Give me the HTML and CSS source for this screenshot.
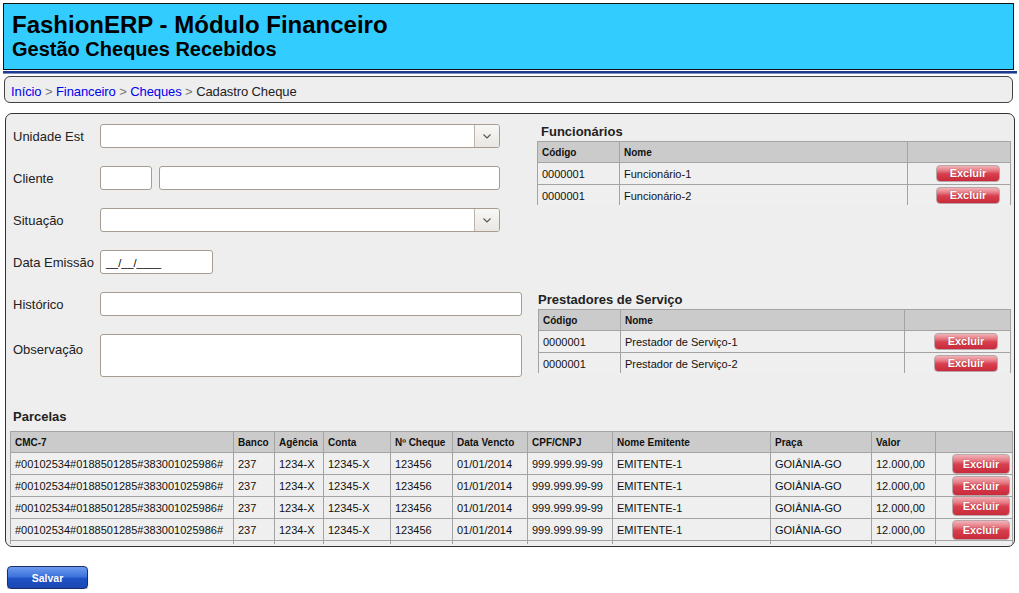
FILE: index.html
```html
<!DOCTYPE html>
<html lang="pt-BR">
<head>
<meta charset="utf-8">
<title>FashionERP - Módulo Financeiro</title>
<link rel="stylesheet" href="styles.css">
</head>
<body>
<header class="app-header">
  <h1 class="app-title">FashionERP - Módulo Financeiro</h1>
  <h2 class="app-subtitle">Gestão Cheques Recebidos</h2>
</header>
<div class="header-rule"></div>
<nav class="breadcrumb">
  <a href="#">Início</a> <span class="sep">&gt;</span> <a href="#">Financeiro</a> <span class="sep">&gt;</span> <a href="#">Cheques</a> <span class="sep">&gt;</span> <span class="current">Cadastro Cheque</span>
</nav>
<main class="panel">
  <div class="panel-top">
    <div class="form">
      <label class="form-label">Unidade Est</label>
      <div class="select">
        <div class="select-value"></div>
        <div class="select-btn"><svg width="8" height="5" viewBox="0 0 8 5"><polyline points="0.5,0.5 4,4 7.5,0.5" fill="none" stroke="#555" stroke-width="1.1"/></svg></div>
      </div>

      <label class="form-label">Cliente</label>
      <div class="pair">
        <div class="input input-code"></div>
        <div class="input input-grow"></div>
      </div>

      <label class="form-label">Situação</label>
      <div class="select">
        <div class="select-value"></div>
        <div class="select-btn"><svg width="8" height="5" viewBox="0 0 8 5"><polyline points="0.5,0.5 4,4 7.5,0.5" fill="none" stroke="#555" stroke-width="1.1"/></svg></div>
      </div>

      <label class="form-label">Data Emissão</label>
      <div class="input input-date">__/__/____</div>

      <label class="form-label">Histórico</label>
      <div class="input input-wide"></div>

      <label class="form-label form-label-top">Observação</label>
      <div class="input input-area"></div>
    </div>

    <aside class="side">
      <section class="side-section">
        <h3 class="section-title section-title-first">Funcionários</h3>
        <div class="grid-clip">
          <table class="grid grid-func">
            <thead>
              <tr><th class="c-cod">Código</th><th class="c-nome">Nome</th><th class="c-act"></th></tr>
            </thead>
            <tbody>
              <tr><td>0000001</td><td>Funcionário-1</td><td class="act act-small"><button class="btn-excluir btn-small">Excluir</button></td></tr>
              <tr><td>0000001</td><td>Funcionário-2</td><td class="act act-small"><button class="btn-excluir btn-small">Excluir</button></td></tr>
            </tbody>
          </table>
        </div>
      </section>
      <section class="side-section side-section-second">
        <h3 class="section-title">Prestadores de Serviço</h3>
        <div class="grid-clip">
          <table class="grid grid-prest">
            <thead>
              <tr><th class="c-cod">Código</th><th class="c-nome">Nome</th><th class="c-act"></th></tr>
            </thead>
            <tbody>
              <tr><td>0000001</td><td>Prestador de Serviço-1</td><td class="act act-small act-prest"><button class="btn-excluir btn-small">Excluir</button></td></tr>
              <tr><td>0000001</td><td>Prestador de Serviço-2</td><td class="act act-small act-prest"><button class="btn-excluir btn-small">Excluir</button></td></tr>
            </tbody>
          </table>
        </div>
      </section>
    </aside>
  </div>

  <section class="parcelas">
    <h3 class="section-title">Parcelas</h3>
    <div class="grid-clip grid-clip-tall">
      <table class="grid grid-parcelas">
        <thead>
          <tr>
            <th class="p-cmc">CMC-7</th><th class="p-banco">Banco</th><th class="p-ag">Agência</th><th class="p-conta">Conta</th><th class="p-cheque">Nº Cheque</th><th class="p-venc">Data Vencto</th><th class="p-cpf">CPF/CNPJ</th><th class="p-nome">Nome Emitente</th><th class="p-praca">Praça</th><th class="p-valor">Valor</th><th class="p-act"></th>
          </tr>
        </thead>
        <tbody>
          <tr><td>#00102534#0188501285#383001025986#</td><td>237</td><td>1234-X</td><td>12345-X</td><td>123456</td><td>01/01/2014</td><td>999.999.99-99</td><td>EMITENTE-1</td><td>GOIÂNIA-GO</td><td>12.000,00</td><td class="act"><button class="btn-excluir">Excluir</button></td></tr>
          <tr><td>#00102534#0188501285#383001025986#</td><td>237</td><td>1234-X</td><td>12345-X</td><td>123456</td><td>01/01/2014</td><td>999.999.99-99</td><td>EMITENTE-1</td><td>GOIÂNIA-GO</td><td>12.000,00</td><td class="act"><button class="btn-excluir">Excluir</button></td></tr>
          <tr><td>#00102534#0188501285#383001025986#</td><td>237</td><td>1234-X</td><td>12345-X</td><td>123456</td><td>01/01/2014</td><td>999.999.99-99</td><td>EMITENTE-1</td><td>GOIÂNIA-GO</td><td>12.000,00</td><td class="act act-up"><button class="btn-excluir">Excluir</button></td></tr>
          <tr><td>#00102534#0188501285#383001025986#</td><td>237</td><td>1234-X</td><td>12345-X</td><td>123456</td><td>01/01/2014</td><td>999.999.99-99</td><td>EMITENTE-1</td><td>GOIÂNIA-GO</td><td>12.000,00</td><td class="act"><button class="btn-excluir">Excluir</button></td></tr>
          <tr class="row-next"><td></td><td></td><td></td><td></td><td></td><td></td><td></td><td></td><td></td><td></td><td></td></tr>
        </tbody>
      </table>
    </div>
  </section>
</main>
<div class="actions">
  <button class="btn-salvar">Salvar</button>
</div>
</body>
</html>
```
FILE: styles.css
```css
* { box-sizing: border-box; }

html, body {
  margin: 0;
  padding: 0;
  background: #fff;
}

body {
  width: 1019px;
  font-family: "Liberation Sans", Arial, sans-serif;
  color: #222;
}

/* Header */
.app-header {
  margin: 3px 5px 0 3px;
  padding: 7px 8px 9px;
  background: #33ccff;
  border: 1px solid #111;
}

.app-title {
  margin: 0;
  font-size: 24px;
  line-height: 27px;
  font-weight: bold;
  color: #000;
}

.app-subtitle {
  margin: 0;
  font-size: 20px;
  line-height: 22px;
  font-weight: bold;
  color: #000;
}

.header-rule {
  margin: 1px 2px 0 3px;
  height: 3px;
  background: linear-gradient(#1e3a8c 0, #1e3a8c 2px, #8190c0 2px, #8190c0 3px);
}

/* Breadcrumb */
.breadcrumb {
  margin: 2px 6px 0 4px;
  padding: 7px 6px 3px;
  border: 1px solid #444;
  border-radius: 6px;
  background: #eee;
  font-size: 13px;
  line-height: 15px;
  letter-spacing: -0.1px;
}

.breadcrumb a {
  color: #0000ee;
  text-decoration: none;
}

.breadcrumb .sep { color: #777; }
.breadcrumb .current { color: #222; }

/* Panel */
.panel {
  display: block;
  margin: 10px 4px 0 5px;
  padding: 10px 1px 2px 7px;
  border: 1px solid #333;
  border-radius: 7px;
  background: #eee;
}

.panel-top {
  display: flex;
  gap: 15px;
  align-items: flex-start;
}

/* Form */
.form {
  width: 509px;
  flex: none;
  display: grid;
  grid-template-columns: 87px 1fr;
  row-gap: 18px;
  align-items: center;
}

.form-label {
  font-size: 13px;
  line-height: 15px;
  color: #222;
}

.form-label-top {
  align-self: start;
  margin-top: 8px;
}

.input {
  height: 24px;
  background: #fff;
  border: 1px solid #a69d90;
  border-radius: 3px;
}

.pair {
  display: flex;
  gap: 7px;
  width: 400px;
}

.input-code { width: 52px; flex: none; }
.input-grow { flex: 1; }

.input-date {
  width: 113px;
  padding: 0 5px;
  font-size: 11px;
  line-height: 24px;
  color: #000;
}

.input-wide { width: 422px; }

.input-area {
  width: 422px;
  height: 43px;
}

.select {
  width: 400px;
  height: 24px;
  display: flex;
  background: #fff;
  border: 1px solid #a69d90;
  border-radius: 3px;
  overflow: hidden;
}

.select-value { flex: 1; }

.select-btn {
  width: 25px;
  flex: none;
  display: flex;
  align-items: center;
  justify-content: center;
  border-left: 1px solid #bdb5a8;
  background: linear-gradient(#f7f7f5, #e9e7e3);
}

/* Side tables */
.side {
  width: 474px;
  flex: none;
}

.section-title {
  margin: 0;
  font-size: 13px;
  line-height: 16px;
  font-weight: bold;
  color: #222;
}

.side-section .section-title {
  margin: 0 0 1px 1px;
}

.side-section .section-title-first {
  margin-left: 4px;
}

.side-section-second {
  margin-top: 87px;
}

.grid-clip {
  height: 64px;
  overflow: hidden;
}

.grid-clip-tall {
  height: 113px;
}

.grid {
  border-collapse: separate;
  border-spacing: 0;
  table-layout: fixed;
  background: #efefef;
}

.grid th,
.grid td {
  padding: 0 4px;
  border-top: 1px solid #a3a3a3;
  border-left: 1px solid #a3a3a3;
  text-align: left;
  vertical-align: middle;
  white-space: nowrap;
  overflow: hidden;
}

.grid th:last-child,
.grid td:last-child {
  border-right: 1px solid #a3a3a3;
}

.grid th {
  height: 21px;
  background: #cbcbcb;
  font-size: 10px;
  font-weight: bold;
  color: #111;
}

.grid td {
  height: 22px;
  font-size: 11px;
  color: #111;
}

.grid-func { width: 474px; }
.grid-func .c-cod { width: 82px; }
.grid-func .c-nome { width: 288px; }
.grid-func .c-act { width: 104px; }

.grid-prest { width: 473px; margin-left: 1px; }
.grid-prest .c-cod { width: 82px; }
.grid-prest .c-nome { width: 284px; }
.grid-prest .c-act { width: 107px; }

.grid td.act {
  text-align: right;
  padding: 0 2px 0 0;
  line-height: 0;
}

.grid td.act-up .btn-excluir {
  position: relative;
  top: -2px;
}

.grid td.act-small { padding-right: 10px; }
.grid td.act-prest { padding-right: 12px; }

/* Parcelas */
.parcelas {
  margin-top: 32px;
}

.parcelas .section-title {
  margin-bottom: 6px;
}

.parcelas .grid-clip {
  margin-left: -3px;
}

.grid-parcelas { width: 1003px; }
.p-cmc { width: 223px; }
.p-banco { width: 41px; }
.p-ag { width: 49px; }
.p-conta { width: 67px; }
.p-cheque { width: 62px; }
.p-venc { width: 75px; }
.p-cpf { width: 85px; }
.p-nome { width: 158px; }
.p-praca { width: 101px; }
.p-valor { width: 64px; }
.p-act { width: 78px; }

/* Buttons */
.btn-excluir {
  display: inline-block;
  width: 58px;
  height: 20px;
  padding: 0;
  border: 1px solid #b8a6a8;
  border-radius: 4px;
  background: linear-gradient(#f2b2b7 0%, #e67d86 30%, #d8404f 52%, #c92a3b 100%);
  color: #fff;
  font-family: "Liberation Sans", Arial, sans-serif;
  font-size: 11px;
  font-weight: bold;
  line-height: 18px;
  text-shadow: 0 0 1px rgba(120, 0, 10, 0.6);
  vertical-align: middle;
  cursor: pointer;
}

.btn-small {
  width: 64px;
  height: 17px;
  line-height: 15px;
}

.actions {
  padding: 19px 0 0 7px;
}

.btn-salvar {
  width: 81px;
  height: 23px;
  padding: 0;
  border: 1px solid #1c2e66;
  border-radius: 4px;
  background: linear-gradient(#6d9cf0 0%, #3f73dc 45%, #2152c4 55%, #1a47b2 100%);
  box-shadow: 0 1px 1px rgba(0, 0, 0, 0.35);
  color: #fff;
  font-family: "Liberation Sans", Arial, sans-serif;
  font-size: 10.5px;
  font-weight: bold;
  cursor: pointer;
}
```
